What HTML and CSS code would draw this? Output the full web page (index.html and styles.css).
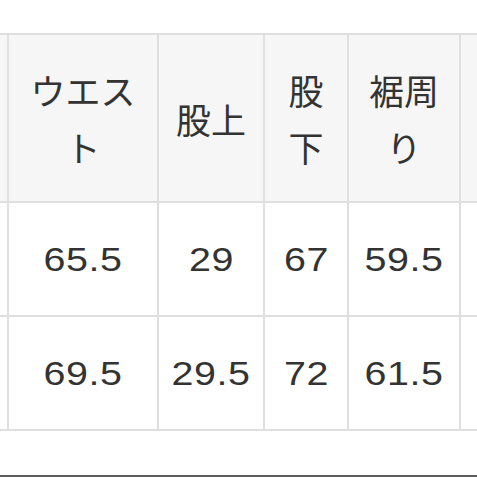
FILE: index.html
```html
<!DOCTYPE html>
<html lang="ja">
<head>
<meta charset="utf-8">
<link rel="stylesheet" href="styles.css">
</head>
<body>
<div class="frame">
  <div class="grid">
    <div class="cell head"></div>
    <div class="cell head"><span class="jp">ウエスト</span></div>
    <div class="cell head"><span class="jp">股上</span></div>
    <div class="cell head"><span class="jp">股下</span></div>
    <div class="cell head"><span class="jp">裾周り</span></div>
    <div class="cell head"></div>

    <div class="cell"></div>
    <div class="cell"><span class="num">65.5</span></div>
    <div class="cell"><span class="num">29</span></div>
    <div class="cell"><span class="num">67</span></div>
    <div class="cell"><span class="num">59.5</span></div>
    <div class="cell"></div>

    <div class="cell"></div>
    <div class="cell"><span class="num">69.5</span></div>
    <div class="cell"><span class="num">29.5</span></div>
    <div class="cell"><span class="num">72</span></div>
    <div class="cell"><span class="num">61.5</span></div>
    <div class="cell"></div>
  </div>
  <div class="footer-bar"></div>
</div>
</body>
</html>
```

FILE: styles.css
```css
html, body {
  margin: 0;
  padding: 0;
  background: #ffffff;
}

body {
  width: 477px;
  height: 477px;
  overflow: hidden;
  font-family: "Liberation Sans", "Noto Sans CJK JP", sans-serif;
  color: #333333;
}

.frame {
  width: 477px;
  height: 477px;
  overflow: hidden;
  display: flex;
  flex-direction: column;
}

.grid {
  margin-top: 33px;
  margin-left: -91px;
  display: grid;
  grid-template-columns: 100px 150px 106px 84px 112px 100px;
  grid-template-rows: 168px 114px 114px;
  border-top: 2px solid #dfdfdf;
  width: max-content;
}

.cell {
  box-sizing: border-box;
  border-right: 2px solid #dfdfdf;
  border-bottom: 2px solid #dfdfdf;
  display: flex;
  align-items: center;
  justify-content: center;
  text-align: center;
  padding: 0 10px;
  background: #ffffff;
}

.cell.head {
  background: #f6f6f6;
}

.jp {
  font-family: "Noto Sans CJK JP", sans-serif;
  font-size: 35px;
  line-height: 57px;
  color: #333333;
}

.num {
  font-family: "Liberation Sans", sans-serif;
  font-size: 34px;
  letter-spacing: 0.5px;
  line-height: 40px;
  display: inline-block;
  transform: scaleX(1.16);
  color: #333333;
}

.footer-bar {
  margin-top: auto;
  height: 2px;
  background: #5c5c5c;
}
```
